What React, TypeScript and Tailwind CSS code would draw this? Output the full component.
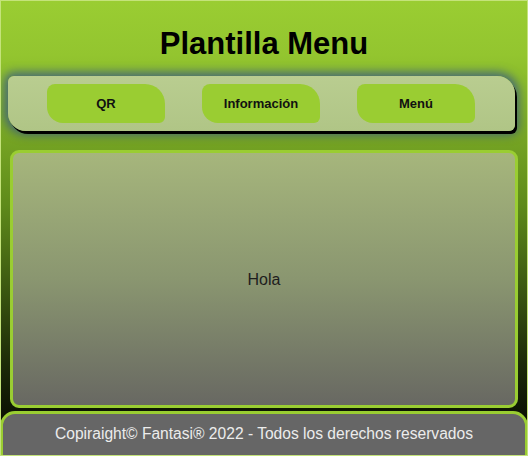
export default function App() {
  const links = ["QR", "Información", "Menú"];
  return (
    <div
      className="h-[456px] w-[528px] overflow-hidden border border-[#c4e37a] bg-[linear-gradient(to_bottom,#9acd32_0%,#93c52f_12%,#5e8a1a_45%,#1c2a08_80%,#000000_100%)] flex flex-col"
      style={{ fontFamily: '"Liberation Sans", Arial, sans-serif' }}
    >
      <header className="shrink-0 h-[75px] flex items-center justify-center pt-[10px]">
        <h1 className="text-[31px] font-bold text-black leading-none">Plantilla Menu</h1>
      </header>

      <nav className="shrink-0 ml-[7px] w-[507px] h-[55px] rounded-[6px_18px_6px_18px] bg-[linear-gradient(to_bottom,#b9cd90,#b0c586)] shadow-[2px_3px_0_#000,0_0_10px_4px_rgba(50,80,140,0.75)] flex items-center gap-[37px] pl-[39px]">
        {links.map((l) => (
          <a
            key={l}
            className="w-[118px] h-[39px] rounded-[8px_20px_6px_16px] bg-[#9acd32] flex items-center justify-center text-[13px] font-bold text-[#111]"
          >
            {l}
          </a>
        ))}
      </nav>

      <main className="shrink-0 mt-[19px] ml-[9px] w-[508px] h-[258px] rounded-[9px] border-[3px] border-[#9acd32] bg-[linear-gradient(to_bottom,#a6b67c,#8a9670_50%,#686862)] flex items-center justify-center">
        <p className="text-[16px] text-[#1e1e1e] pt-[2px]">Hola</p>
      </main>

      <footer className="shrink-0 mt-[3px] -mx-px h-[60px] rounded-t-[15px] border-[3px] border-[#9acd32] bg-[#666666] flex justify-center pt-[10px]">
        <p className="text-[15.6px] text-[#ececec] leading-[20px]">
          Copiraight© Fantasi® 2022 - Todos los derechos reservados
        </p>
      </footer>
    </div>
  );
}
